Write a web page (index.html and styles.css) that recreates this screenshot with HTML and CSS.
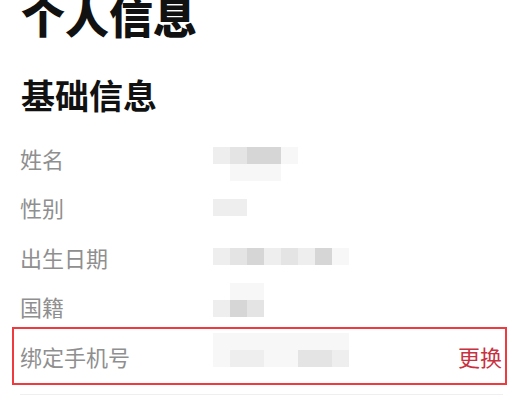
FILE: index.html
```html
<!DOCTYPE html>
<html>

<head>
    <title>个人信息</title>
    <link rel="stylesheet" href="styles.css">
</head>

<body>
    <div class="page">
        <h1 class="title">个人信息</h1>
        <h2 class="section">基础信息</h2>
        <div class="list">
            <div class="row">
                <span class="label">姓名</span>
                <div class="mosaic low">
                    <div class="mrow"><i class="m2"></i><i class="m3"></i><i class="m4"></i><i class="m4"></i><i class="m1"></i></div>
                    <div class="mrow"><i></i><i class="m1"></i><i class="m1"></i><i class="m1"></i></div>
                </div>
            </div>
            <div class="row">
                <span class="label">性别</span>
                <div class="mosaic">
                    <div class="mrow"><i class="m2"></i><i class="m2"></i></div>
                </div>
            </div>
            <div class="row">
                <span class="label">出生日期</span>
                <div class="mosaic">
                    <div class="mrow"><i class="m2"></i><i class="m3"></i><i class="m4"></i><i class="m2"></i><i class="m3"></i><i class="m2"></i><i class="m4"></i><i class="m1"></i></div>
                </div>
            </div>
            <div class="row">
                <span class="label">国籍</span>
                <div class="mosaic high">
                    <div class="mrow"><i></i><i class="m1"></i><i class="m1"></i></div>
                    <div class="mrow"><i class="m2"></i><i class="m4"></i><i class="m3"></i></div>
                </div>
            </div>
            <div class="row highlight">
                <span class="label">绑定手机号</span>
                <div class="mosaic high">
                    <div class="mrow"><i class="m1"></i><i class="m1"></i><i class="m1"></i><i class="m1"></i><i class="m1"></i><i class="m1"></i><i class="m1"></i><i class="m1"></i></div>
                    <div class="mrow"><i class="m1"></i><i class="m2"></i><i class="m2"></i><i class="m1"></i><i class="m1"></i><i class="m3"></i><i class="m3"></i><i class="m2"></i></div>
                </div>
                <a class="action">更换</a>
            </div>
        </div>
        <div class="divider"></div>
    </div>
</body>

</html>
```

FILE: styles.css
```css
body {
    margin: 0;
    background: #fff;
    font-family: "Noto Sans CJK SC", "Noto Sans", sans-serif;
    overflow: hidden;
}

.page {
    padding: 0 19px 0 12px;
}

.title {
    margin: -7px 0 0 9px;
    font-size: 44px;
    line-height: 44px;
    font-weight: 900;
    color: #111;
}

.section {
    margin: 41px 0 0 9px;
    font-size: 34px;
    line-height: 34px;
    font-weight: bold;
    color: #111;
}

.list {
    margin-top: 21px;
}

.row {
    display: grid;
    grid-template-columns: 193px 1fr auto;
    align-items: center;
    height: 49.5px;
    padding: 0 1px 0 4px;
    margin: 0 4px;
}

.label {
    font-size: 22px;
    color: #8f8f8f;
}

.mosaic {
    display: flex;
    flex-direction: column;
}

.mosaic.low {
    margin-top: 12px;
}

.mosaic.high {
    margin-bottom: 12px;
}

.mrow {
    display: flex;
}

.mrow i {
    width: 17px;
    height: 17px;
}

.m1 { background: #f7f7f7; }
.m2 { background: #eeeeee; }
.m3 { background: #e4e4e4; }
.m4 { background: #d6d6d6; }

.highlight {
    outline: 2px solid #ef3a3f;
    outline-offset: 2px;
}

.action {
    font-size: 22px;
    color: #c8313f;
    cursor: pointer;
}

.divider {
    height: 1px;
    background: #efefef;
    margin: 13px 4px 0 8px;
}
```
